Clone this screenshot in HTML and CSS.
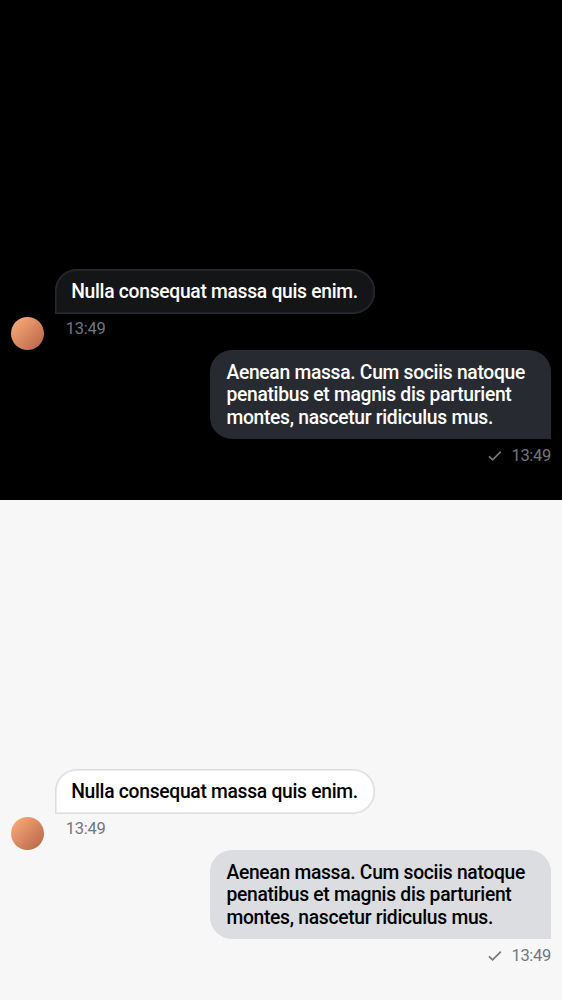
FILE: index.html
```html
<!DOCTYPE html>
<html lang="en">
<head>
<meta charset="utf-8">
<title>Messages</title>
<link rel="stylesheet" href="styles.css">
</head>
<body>
<section class="thread dark">
  <div class="incoming">
    <div class="avatar"></div>
    <div class="message">
      <p class="bubble received">Nulla consequat massa quis enim.</p>
      <time class="time">13:49</time>
    </div>
  </div>
  <div class="outgoing">
    <p class="bubble sent">Aenean massa. Cum sociis natoque<br>penatibus et magnis dis parturient<br>montes, nascetur ridiculus mus.</p>
    <div class="status">
      <svg class="check" viewBox="0 0 16 12"><path d="M2 6.3 L5.6 9.9 L13.8 1.7"/></svg>
      <time class="time">13:49</time>
    </div>
  </div>
</section>
<section class="thread light">
  <div class="incoming">
    <div class="avatar"></div>
    <div class="message">
      <p class="bubble received">Nulla consequat massa quis enim.</p>
      <time class="time">13:49</time>
    </div>
  </div>
  <div class="outgoing">
    <p class="bubble sent">Aenean massa. Cum sociis natoque<br>penatibus et magnis dis parturient<br>montes, nascetur ridiculus mus.</p>
    <div class="status">
      <svg class="check" viewBox="0 0 16 12"><path d="M2 6.3 L5.6 9.9 L13.8 1.7"/></svg>
      <time class="time">13:49</time>
    </div>
  </div>
</section>
</body>
</html>
```
FILE: styles.css
```css
* { box-sizing: border-box; }
body { margin: 0; font-family: Roboto, sans-serif; }
p { margin: 0; }
.thread {
  height: 500px;
  padding: 0 11px 34px;
  display: flex;
  flex-direction: column;
  justify-content: flex-end;
}
.dark {
  background: #000;
  --text: #fff;
  --received: #141517;
  --border: #272a30;
  --border-soft: #272a3090;
  --sent: #272a30;
  --muted: #72767e;
}
.light {
  background: #f7f7f7;
  --text: #000;
  --received: #fff;
  --border: #dbdde1;
  --border-soft: #dbdde190;
  --sent: #dbdde1;
  --muted: #72767e;
}
.incoming { display: flex; align-items: flex-end; gap: 11px; }
.avatar {
  width: 33px;
  height: 33px;
  border-radius: 50%;
  background: linear-gradient(135deg, #ffb07c, #b46145);
}
.message { height: 81px; display: flex; flex-direction: column; }
.bubble {
  color: var(--text);
  font-size: 19.3px;
  font-weight: 500;
  line-height: 22.4px;
  letter-spacing: -0.3px;
  white-space: nowrap;
}
.received {
  height: 45px;
  width: 320px;
  padding: 12px 16.2px 10px;
  background: var(--received);
  box-shadow: inset 0 0 0 1px var(--border), inset 0 0 0 2px var(--border-soft);
  border-radius: 22px 22px 22px 0;
}
.time { color: var(--muted); font-size: 16.5px; line-height: 20px; letter-spacing: -0.3px; }
.message .time { margin: 5px 0 0 10.8px; }
.outgoing { display: flex; flex-direction: column; align-items: flex-end; }
.sent {
  width: 341px;
  height: 89px;
  padding: 12px 16.4px 10px;
  background: var(--sent);
  border-radius: 22px 22px 0 22px;
}
.status { display: flex; align-items: center; gap: 8.5px; height: 20px; margin-top: 7px; }
.check {
  width: 16px;
  height: 12px;
  fill: none;
  stroke: var(--muted);
  stroke-width: 1.7;
}
```
